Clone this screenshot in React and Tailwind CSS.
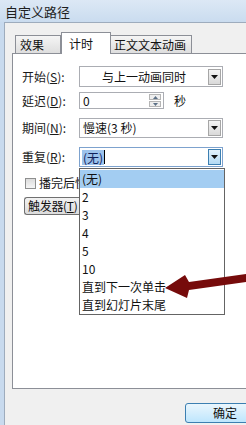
import React from 'react';

const font = { fontFamily: '"Noto Sans CJK SC", "Liberation Sans", sans-serif' };

const Caret = ({ blue }) => (
  <div
    className={`w-[13px] h-[16px] flex items-center justify-center border ${
      blue
        ? 'border-[#3c7fb1] bg-[linear-gradient(to_bottom,#e3f2fc,#b3daf4)]'
        : 'border-[#a6a6a6] bg-[linear-gradient(to_bottom,#f4f4f4,#d9d9d9)]'
    }`}
  >
    <svg width="7" height="4" viewBox="0 0 7 4">
      <path d="M0 0H7L3.5 4Z" fill="#111" />
    </svg>
  </div>
);

const Label = ({ text, k }) => (
  <div className="w-[57px] text-[12px] leading-none text-[#1a1a1a]">
    {text}(<span className="underline underline-offset-1">{k}</span>):
  </div>
);

const items = ['(无)', '2', '3', '4', '5', '10', '直到下一次单击', '直到幻灯片末尾'];

export default function App() {
  return (
    <div
      className="relative w-[246px] h-[425px] overflow-hidden bg-[#c8daee] text-[#111]"
      style={font}
    >
      <div className="h-[22px] flex items-center pl-[5px] text-[13px] leading-none bg-[linear-gradient(to_bottom,#dce8f5,#cadcef)] text-[#1e1e1e]">
        自定义路径
      </div>

      <div className="ml-[4px] h-[403px] bg-[#f0f0f0] border-t border-l border-[#9eacbd] pt-[9px]">
        {/* tabs */}
        <div className="flex items-end pl-[10px] text-[12px] leading-none">
          <div className="w-[46px] h-[18px] border border-b-0 border-[#8c8f97] bg-[linear-gradient(to_bottom,#f5f5f5,#dedede)] flex items-center pl-[4px]">
            效果
          </div>
          <div className="relative z-10 w-[50px] h-[22px] -mb-px border border-b-0 border-[#8c8f97] bg-white flex items-center pl-[7px]">
            计时
          </div>
          <div className="w-[81px] h-[18px] border border-b-0 border-l-0 border-[#8c8f97] bg-[linear-gradient(to_bottom,#f5f5f5,#dedede)] flex items-center pl-[3px]">
            正文文本动画
          </div>
        </div>

        {/* panel */}
        <div className="relative ml-[7px] w-[260px] h-[336px] border border-[#8c8f97] bg-white pt-[12px] pl-[9px]">
          <div className="flex items-center h-[21px]">
            <Label text="开始" k="S" />
            <div className="w-[144px] h-[21px] border border-[#abadb3] flex items-center justify-between pr-[1px]">
              <span className="flex-1 text-center text-[12px] leading-none">与上一动画同时</span>
              <Caret />
            </div>
          </div>

          <div className="flex items-center h-[17px] mt-[5px]">
            <Label text="延迟" k="D" />
            <div className="w-[85px] h-[17px] border border-[#abadb3] flex items-center justify-between pl-[3px] pr-[2px]">
              <span className="text-[12px] leading-none">0</span>
              <div className="flex flex-col gap-px">
                <div className="w-[12px] h-[6px] border border-[#b5b5b5] bg-[#eeeeee] flex items-center justify-center">
                  <svg width="5" height="3" viewBox="0 0 5 3"><path d="M0 3H5L2.5 0Z" fill="#5b6f86" /></svg>
                </div>
                <div className="w-[12px] h-[6px] border border-[#b5b5b5] bg-[#eeeeee] flex items-center justify-center">
                  <svg width="5" height="3" viewBox="0 0 5 3"><path d="M0 0H5L2.5 3Z" fill="#5b6f86" /></svg>
                </div>
              </div>
            </div>
            <span className="ml-[10px] text-[12px] leading-none">秒</span>
          </div>

          <div className="flex items-center h-[20px] mt-[9px]">
            <Label text="期间" k="N" />
            <div className="w-[144px] h-[20px] border border-[#abadb3] flex items-center justify-between pl-[3px] pr-[1px]">
              <span className="text-[12px] leading-none">慢速(3 秒)</span>
              <Caret />
            </div>
          </div>

          <div className="flex items-center h-[20px] mt-[9px]">
            <Label text="重复" k="R" />
            <div className="w-[144px] h-[20px] border border-[#7da2ce] flex items-center justify-between pl-[2px] pr-[1px]">
              <span className="flex items-center">
                <span className="bg-[#9dc3ec] text-[12px] leading-[15px] px-px text-[#10205a]">(无)</span>
                <span className="w-px h-[14px] bg-black" />
              </span>
              <Caret blue />
            </div>
          </div>

          <div className="flex items-center h-[14px] mt-[9px] pl-[3px]">
            <div className="shrink-0 w-[11px] h-[11px] border border-[#8e8f8f] bg-[linear-gradient(to_bottom,#dcdcdc,#f6f6f6)]" />
            <span className="ml-[3px] w-[40px] overflow-hidden whitespace-nowrap text-[12px] leading-none">播完后快退</span>
          </div>

          <div className="mt-[7px] ml-[2px] w-[55px] h-[18px] overflow-hidden whitespace-nowrap border border-[#707070] border-r-0 rounded-l-[3px] bg-[linear-gradient(to_bottom,#f2f2f2,#dcdcdc)] flex items-center pl-[3px] text-[12px] leading-none tracking-[-0.3px]">
            触发器(<span className="underline underline-offset-1">T</span>)
          </div>

          {/* open list */}
          <div className="absolute z-20 left-[66px] top-[114px] w-[146px] h-[147px] border border-[#646464] bg-white pt-px">
            {items.map((t, i) => (
              <div
                key={t}
                className={`h-[18px] flex items-center pl-[2px] text-[12px] leading-none ${
                  i === 0 ? 'bg-[#a3cdf2]' : ''
                }`}
              >
                {t}
              </div>
            ))}
          </div>
        </div>

        <div className="flex mt-[14px] pl-[180px]">
          <div className="shrink-0 w-[80px] h-[20px] border border-[#3c7fb1] rounded-[3px] bg-[linear-gradient(to_bottom,#eaf6fd,#bee6fd)] flex items-center justify-center text-[12px] leading-none">
            确定
          </div>
        </div>
      </div>

      <svg className="absolute left-0 top-0 pointer-events-none z-30" width="246" height="425" viewBox="0 0 246 425">
        <path d="M165 288L185 275L189 282L246 274L246 282L189 290L187 298Z" fill="#760b0b" />
      </svg>
    </div>
  );
}
